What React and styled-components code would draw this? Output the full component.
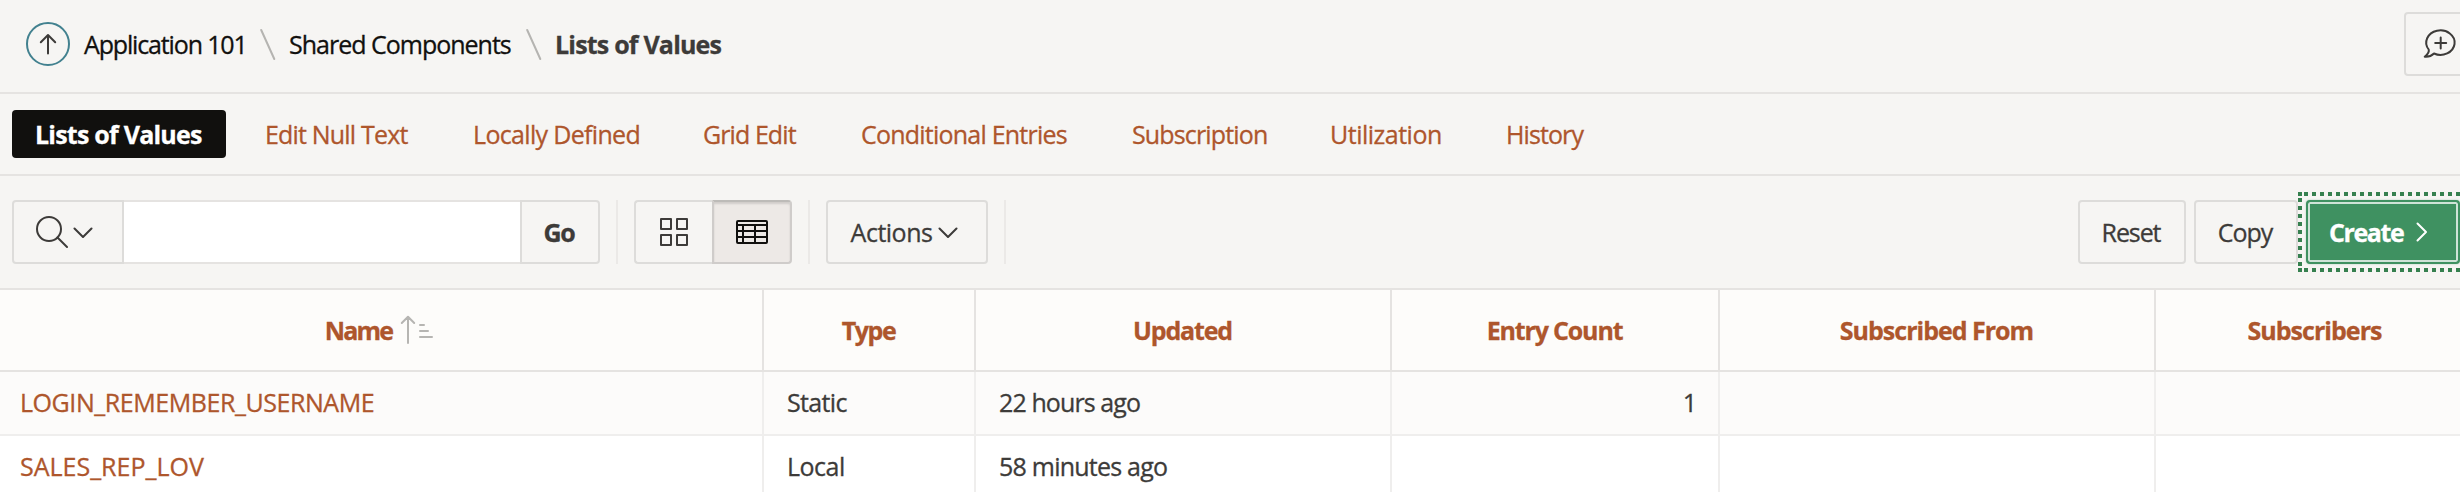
import React from 'react';
import styled, { createGlobalStyle, css } from 'styled-components';

const color = {
  canvas: '#f6f5f3',
  line: '#e5e3e1',
  softLine: '#efeeed',
  buttonLine: '#dddcda',
  text: '#3d3b39',
  ink: '#11100e',
  link: '#ae562c',
  green: '#3f9161',
  ring: '#36804f',
};

const GlobalStyle = createGlobalStyle`
  * { box-sizing: border-box; }
  body {
    margin: 0;
    background: #fff;
    overflow: hidden;
    color: ${color.text};
    font: 400 25px/34px "Open Sans", "Noto Sans", sans-serif;
    -webkit-text-stroke: 0.3px currentColor;
  }
  button, input { font: inherit; color: inherit; margin: 0; }
`;

const Page = styled.div`
  width: 100%;
  height: 492px;
  overflow: hidden;
`;

const Label = styled.span`
  white-space: nowrap;
  letter-spacing: ${(p) => p.$track || 0}px;
`;

const Header = styled.header`
  height: 94px;
  display: flex;
  justify-content: space-between;
  padding: 12px 0 0 26px;
  overflow: hidden;
  background: ${color.canvas};
  border-bottom: 2px solid ${color.line};
`;

const Breadcrumb = styled.nav`
  height: 64px;
  display: flex;
  align-items: center;
`;

const UpLink = styled.a`
  width: 44px;
  height: 44px;
  margin-right: 14px;
  display: grid;
  place-items: center;
  border: 2px solid #42818f;
  border-radius: 50%;
`;

const Crumb = styled.span`
  flex: none;
  width: ${(p) => p.$width}px;
  color: ${(p) => (p.$current ? color.text : color.ink)};
  font-weight: ${(p) => (p.$current ? 700 : 400)};
`;

const Slash = styled.svg`
  flex: none;
  width: 42px;
  height: 34px;
`;

const Tabs = styled.nav`
  height: 82px;
  display: flex;
  gap: 16px;
  padding: 16px 12px;
  background: ${color.canvas};
  border-bottom: 2px solid ${color.line};
`;

const Tab = styled.a`
  flex: none;
  width: ${(p) => p.$width}px;
  height: 48px;
  padding-left: 23px;
  line-height: 48px;
  border-radius: 4px;
  color: ${color.link};
  ${(p) =>
    p.$active &&
    css`
      background: ${color.ink};
      color: #fff;
      font-weight: 700;
    `}
`;

const Toolbar = styled.section`
  height: 114px;
  display: flex;
  padding: 24px 0 24px 12px;
  background: ${color.canvas};
  border-bottom: 2px solid ${color.line};
`;

const Divider = styled.span`
  flex: none;
  width: 2px;
  height: 64px;
  margin: 0 16px;
  background: #ebe9e7;
`;

const Button = styled.button`
  flex: none;
  width: ${(p) => p.$width}px;
  height: 64px;
  padding: 0 ${(p) => p.$trail || 0}px 0 0;
  display: flex;
  align-items: center;
  justify-content: center;
  gap: ${(p) => p.$gap || 0}px;
  background: transparent;
  border: 2px solid ${color.buttonLine};
  border-radius: ${(p) => p.$radius || '4px'};
  font-weight: ${(p) => (p.$bold ? 700 : 400)};
`;

/* runs past the right edge of the window */
const FeedbackButton = styled(Button)`
  margin-right: -16px;
`;

const ToggleButton = styled(Button)`
  border-right-width: 0;
  ${(p) =>
    p.$pressed &&
    css`
      background: #ede9e6;
      border: 2px solid #cfccca;
      border-top-color: #bdbbb8;
      color: ${color.ink};
      box-shadow: inset 0 2px 2px rgba(0, 0, 0, 0.12);
    `}
`;

const SearchInput = styled.input`
  width: 396px;
  height: 64px;
  padding: 0 16px;
  background: #fff;
  border: solid ${color.line};
  border-width: 2px 0;
  border-radius: 0;
  outline: 0;
`;

const PageActions = styled.div`
  display: flex;
  gap: 8px;
  margin-left: auto;
`;

const CreateButton = styled(Button)`
  position: relative;
  justify-content: flex-start;
  padding-left: 21px;
  gap: 13px;
  background: ${color.green};
  border-color: ${color.green};
  color: #fff;
  box-shadow: inset 0 0 0 2px #cfe3d7, 0 0 2px #a9cdb7;

  /* square-dotted keyboard focus ring */
  &::before {
    content: '';
    position: absolute;
    inset: -10px;
    pointer-events: none;
    background:
      linear-gradient(${color.ring}, ${color.ring}) 0 0 / 4px 4px no-repeat,
      linear-gradient(${color.ring}, ${color.ring}) 0 100% / 4px 4px no-repeat,
      linear-gradient(90deg, ${color.ring} 50%, transparent 50%) 6px 0 / 8px 4px repeat-x,
      linear-gradient(90deg, ${color.ring} 50%, transparent 50%) 6px 100% / 8px 4px repeat-x,
      linear-gradient(180deg, ${color.ring} 50%, transparent 50%) 0 6px / 4px 8px repeat-y;
  }
`;

const Report = styled.div`
  display: grid;
  grid-template-columns: 764px 212px 416px 328px 436px 320px;
`;

const HeadCell = styled.div`
  height: 82px;
  display: flex;
  align-items: center;
  justify-content: center;
  gap: 8px;
  padding-right: ${(p) => (p.$sorted ? 4 : 1)}px;
  background: #fdfcfa;
  border: solid ${color.line};
  border-width: 0 2px 2px 0;
  color: ${color.link};
  font-weight: 700;
`;

const Cell = styled.div`
  height: 64px;
  padding: 13px 21px 0 ${(p) => (p.$first ? 20 : 23)}px;
  background: ${(p) => (p.$striped ? '#fcfbfa' : '#fff')};
  border: solid ${color.softLine};
  border-width: 0 2px 2px 0;
  color: ${(p) => (p.$first ? color.link : color.text)};
  text-align: ${(p) => (p.$numeric ? 'right' : 'left')};
`;

const Icon = styled.svg`
  flex: none;
  display: block;
  fill: none;
  stroke: ${(p) => p.$stroke || 'currentColor'};
  stroke-width: 2;
  stroke-linecap: round;
  stroke-linejoin: round;
`;

const CrumbSlash = () => (
  <Slash viewBox="0 0 42 34">
    <path d="M14.2 3 27.3 32" stroke="#b5b4b1" strokeWidth="2" strokeLinecap="round" />
  </Slash>
);

const ChevronDown = () => (
  <Icon width="20" height="12" viewBox="0 0 20 12">
    <path d="M1.5 2.5 10 11 18.5 2.5" />
  </Icon>
);

const tabs = [
  ['Lists of Values', 214, -0.77],
  ['Edit Null Text', 192, -0.82],
  ['Locally Defined', 214, -0.67],
  ['Grid Edit', 142, -0.92],
  ['Conditional Entries', 255, -0.78],
  ['Subscription', 182, -0.85],
  ['Utilization', 160, -0.5],
  ['History', 126, -0.9],
];

const columns = [
  ['Name', -1.8],
  ['Type', -1.4],
  ['Updated', -1.15],
  ['Entry Count', -1.16],
  ['Subscribed From', -1],
  ['Subscribers', -0.97],
];

const rows = [
  [['LOGIN_REMEMBER_USERNAME', -0.44], ['Static', -0.66], ['22 hours ago', -0.9], ['1', 0], ['', 0], ['', 0]],
  [['SALES_REP_LOV', 0], ['Local', -0.5], ['58 minutes ago', -0.77], ['', 0], ['', 0], ['', 0]],
];

export default function App() {
  return (
    <Page>
      <GlobalStyle />
      <Header>
        <Breadcrumb>
          <UpLink>
            <Icon width="20" height="24" viewBox="0 0 20 24" $stroke={color.text}>
              <path d="M10 21.5V3M2.8 10.2 10 3l7.2 7.2" />
            </Icon>
          </UpLink>
          <Crumb $width={163}><Label $track={-1.15}>Application 101</Label></Crumb>
          <CrumbSlash />
          <Crumb $width={224}><Label $track={-1}>Shared Components</Label></Crumb>
          <CrumbSlash />
          <Crumb $width={170} $current><Label $track={-0.8}>Lists of Values</Label></Crumb>
        </Breadcrumb>
        <FeedbackButton $width={72}>
          <Icon width="36" height="32" viewBox="0 0 36 32">
            <path d="M6.7 21.5A14.2 12.2 0 1 1 12 25.5C9 28.5 6 29 2.7 28.7 5.5 26.5 7.6 24.4 6.7 21.5ZM18.7 9.5v11M13.2 15h11" />
          </Icon>
        </FeedbackButton>
      </Header>

      <Tabs>
        {tabs.map(([name, width, track], i) => (
          <Tab key={name} $width={width} $active={i === 0}>
            <Label $track={track}>{name}</Label>
          </Tab>
        ))}
      </Tabs>

      <Toolbar>
        <Button $width={112} $gap={5} $trail={9} $radius="4px 0 0 4px">
          <Icon width="34" height="34" viewBox="0 0 34 34">
            <circle cx="15" cy="14" r="12" />
            <path d="m23.5 22.5 9.5 9.5" />
          </Icon>
          <ChevronDown />
        </Button>
        <SearchInput aria-label="Search" />
        <Button $width={80} $bold $trail={2} $radius="0 4px 4px 0"><Label $track={-1.2}>Go</Label></Button>
        <Divider />
        <ToggleButton $width={78} $radius="4px 0 0 4px">
          <Icon width="28" height="28" viewBox="0 0 28 28">
            <path d="M1 1h10v10H1zM17 1h10v10H17zM1 17h10v10H1zM17 17h10v10H17z" />
          </Icon>
        </ToggleButton>
        <ToggleButton $width={80} $pressed $radius="0 4px 4px 0">
          <Icon width="32" height="24" viewBox="0 0 32 24">
            <path d="M2 1h28q1 0 1 1v20q0 1-1 1H2q-1 0-1-1V2q0-1 1-1ZM1 5h30M1 11h30M1 17h30M7 5v18M19 5v18" />
          </Icon>
        </ToggleButton>
        <Divider />
        <Button $width={162} $gap={6} $trail={5}>
          <Label $track={-0.5}>Actions</Label>
          <ChevronDown />
        </Button>
        <Divider />
        <PageActions>
          <Button $width={108} $trail={2}><Label $track={-1.1}>Reset</Label></Button>
          <Button $width={104} $trail={2}><Label $track={-1}>Copy</Label></Button>
          <CreateButton $width={154} $bold>
            <Label $track={-1.4}>Create</Label>
            <Icon width="12" height="20" viewBox="0 0 12 20">
              <path d="m1.5 1.5 8.5 8.5-8.5 8.5" />
            </Icon>
          </CreateButton>
        </PageActions>
      </Toolbar>

      <Report>
        {columns.map(([name, track], i) => (
          <HeadCell key={name} $sorted={i === 0}>
            <Label $track={track}>{name}</Label>
            {i === 0 && (
              <Icon width="33" height="30" viewBox="0 0 33 30" $stroke="#b6b5b2">
                <path d="M8 28V2M1.8 8 8 1.8 14.2 8M20 10h4M20 16h8M20 22h12" />
              </Icon>
            )}
          </HeadCell>
        ))}
        {rows.map((row, r) =>
          row.map(([value, track], c) => (
            <Cell key={`${r}-${c}`} $striped={r % 2 === 0} $first={c === 0} $numeric={c === 3}>
              <Label $track={track}>{value}</Label>
            </Cell>
          ))
        )}
      </Report>
    </Page>
  );
}
